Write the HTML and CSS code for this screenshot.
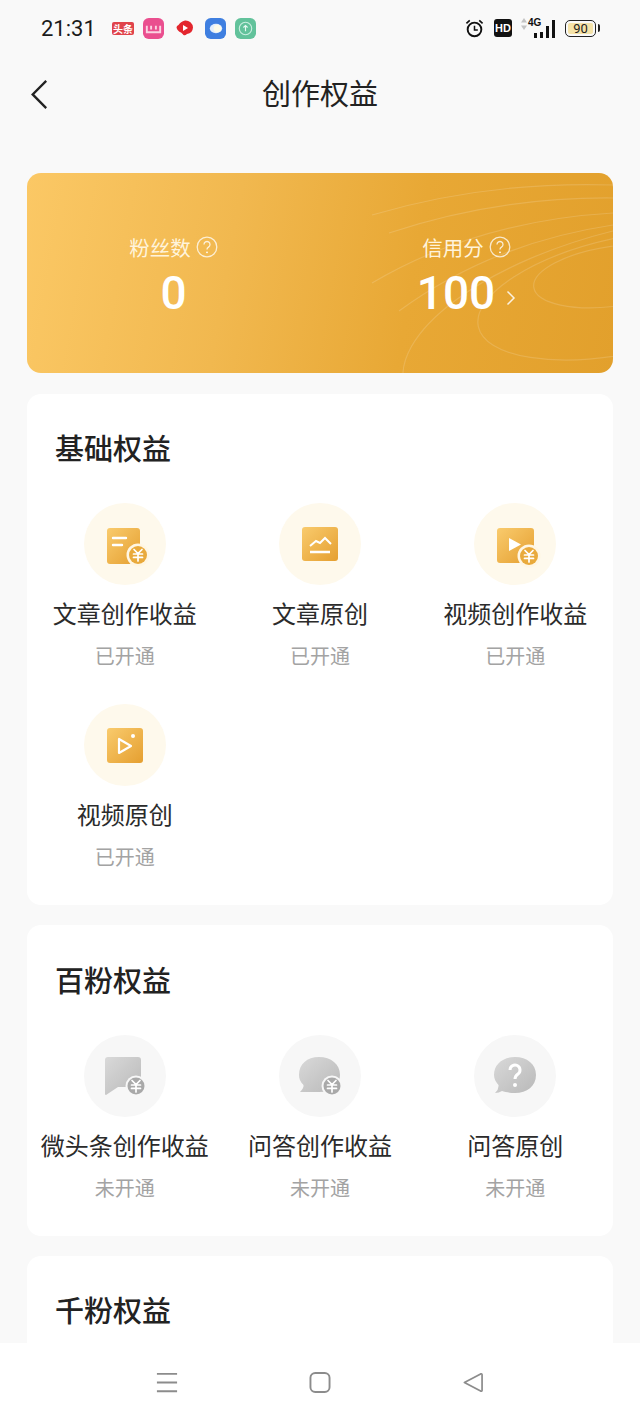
FILE: index.html
```html
<!DOCTYPE html>
<html>
<head>
    <title>创作权益</title>
    <meta name="viewport" content="width=device-width, initial-scale=1.0">
    <meta charset="utf-8">
    <link rel="stylesheet" href="styles.css">
</head>

<body>
    <svg class="defs" width="0" height="0">
        <defs>
            <linearGradient id="gold" x1="0" y1="0" x2="1" y2="1">
                <stop offset="0" stop-color="#f9cb6d"/>
                <stop offset="1" stop-color="#e59f30"/>
            </linearGradient>
            <linearGradient id="grey" x1="0" y1="0" x2="1" y2="1">
                <stop offset="0" stop-color="#d9d9d9"/>
                <stop offset="1" stop-color="#b9b9b9"/>
            </linearGradient>
            <g id="yen" fill="none" stroke="#fff" stroke-width="1.7" stroke-linecap="round">
                <path d="M-4-5.5L0-1.5L4-5.5M-4.5-1H4.5M-4.5 2.4H4.5M0-1.5V6"/>
            </g>
        </defs>
    </svg>

    <div class="status-bar">
        <div class="status-left">
            <span class="time">21:31</span>
            <span class="app-toutiao">头条</span>
            <svg class="app-icon" viewBox="0 0 22 22"><rect width="22" height="22" rx="6" fill="#ea4f8f"/><path d="M4 8V15H18V8M8.500 8V12M13.500 8V12" fill="none" stroke="#fbd3e2" stroke-width="2"/></svg>
            <svg class="app-icon app-video" viewBox="0 0 18 18"><path d="M9 1.500a7.500 7.500 0 0 1 8 7a7 7 0 0 1-6 6.500q-2 2-3.500 1q-1-1.500-2.500-2.500a7 7 0 0 1-4.500-5q0-2 2-2.500q2-3.500 6.500-4.500z" fill="#e3262e"/><path d="M7 6L12 9L7 12z" fill="#fff"/></svg>
            <svg class="app-icon" viewBox="0 0 22 22"><rect width="22" height="22" rx="6" fill="#3f7fe0"/><ellipse cx="11.500" cy="11" rx="6.500" ry="5" fill="#e4effc"/><circle cx="13" cy="11" r="4" fill="#fdfbe9"/></svg>
            <svg class="app-icon" viewBox="0 0 22 22"><rect width="22" height="22" rx="6" fill="#62c29b"/><circle cx="11" cy="11" r="6.500" fill="none" stroke="#c9eee0" stroke-width="1.200"/><path d="M11 14V8M8.800 10L11 8L13.200 10" fill="none" stroke="#e6f8f1" stroke-width="1.200"/></svg>
        </div>
        <div class="status-right">
            <svg class="alarm" viewBox="0 0 20 20"><circle cx="10" cy="11" r="7.200" fill="none" stroke="#111" stroke-width="2"/><path d="M10 7V11.500H13.500" fill="none" stroke="#111" stroke-width="1.600"/><path d="M1.500 4.500L5 1.500M18.500 4.500L15 1.500" stroke="#111" stroke-width="1.800"/></svg>
            <span class="hd">HD</span>
            <div class="signal">
                <svg class="updown" viewBox="0 0 6 12"><path d="M3 0L6 4.500H0zM3 12L0 7.500H6z" fill="#c4c4c4"/></svg>
                <span class="net">4G</span>
                <span class="bar bar-1"></span>
                <span class="bar bar-2"></span>
                <span class="bar bar-3"></span>
                <span class="bar bar-4"></span>
            </div>
            <div class="battery"><span class="battery-level">90</span></div>
        </div>
    </div>

    <div class="title-bar">
        <svg class="back" viewBox="0 0 20 32" preserveAspectRatio="none"><path d="M18 2L3 16.500L18 31" fill="none" stroke="#222" stroke-width="2.600"/></svg>
        <h1>创作权益</h1>
    </div>

    <div class="page">
        <div class="banner">
            <svg class="contour" viewBox="0 0 586 200" fill="none" stroke="#fff" stroke-opacity=".15" stroke-width="1.200">
                <path d="M345 42Q460 8 586 12M362 60Q470 24 586 25M345 110Q450 48 586 40M372 138Q465 70 586 52"/>
                <ellipse cx="588" cy="103" rx="82" ry="30" transform="rotate(-8 588 103)"/>
                <ellipse cx="600" cy="122" rx="152" ry="58" transform="rotate(-12 600 122)"/>
                <ellipse cx="610" cy="155" rx="240" ry="100" transform="rotate(-14 610 155)"/>
            </svg>
            <div class="stat">
                <div class="stat-label">粉丝数
                    <svg class="help" viewBox="0 0 22 22"><circle cx="11" cy="11" r="9.800" fill="none" stroke="#fff" stroke-opacity=".75" stroke-width="1.300"/><path d="M8 8.500a3 3 0 1 1 4.500 2.600q-1.500.9-1.500 2.400" fill="none" stroke="#fff" stroke-opacity=".8" stroke-width="1.300"/><circle cx="11" cy="16.300" r=".9" fill="#fff"/></svg>
                </div>
                <div class="stat-value">0</div>
            </div>
            <div class="stat">
                <div class="stat-label">信用分
                    <svg class="help" viewBox="0 0 22 22"><circle cx="11" cy="11" r="9.800" fill="none" stroke="#fff" stroke-opacity=".75" stroke-width="1.300"/><path d="M8 8.500a3 3 0 1 1 4.500 2.600q-1.500.9-1.500 2.400" fill="none" stroke="#fff" stroke-opacity=".8" stroke-width="1.300"/><circle cx="11" cy="16.300" r=".9" fill="#fff"/></svg>
                </div>
                <div class="stat-value">100
                    <svg class="arrow" viewBox="0 0 10 16"><path d="M1.500 1.500L8 8L1.500 14.500" fill="none" stroke="#fff" stroke-opacity=".85" stroke-width="1.500"/></svg>
                </div>
            </div>
        </div>

        <div class="card">
            <h2>基础权益</h2>
            <div class="grid">
                <div class="item">
                    <svg class="badge-icon on" viewBox="0 0 82 82">
                        <rect x="23" y="25" width="33" height="36" rx="3" fill="url(#gold)"/>
                        <path d="M29 35H42M29 42H38" stroke="#fff" stroke-width="2.400" stroke-linecap="round"/>
                        <circle cx="54" cy="52" r="11.500" fill="#fff6e3"/>
                        <circle cx="54" cy="52" r="9" fill="#e9aa3c"/>
                        <use href="#yen" x="54" y="52"/>
                    </svg>
                    <div class="name">文章创作收益</div>
                    <div class="state">已开通</div>
                </div>
                <div class="item">
                    <svg class="badge-icon on" viewBox="0 0 82 82">
                        <rect x="23" y="24" width="36" height="34" rx="3" fill="url(#gold)"/>
                        <path d="M31 43L37 38L41 40L46 35L52 41" fill="none" stroke="#fff" stroke-width="2"/>
                        <path d="M31 49H51" stroke="#fff" stroke-width="2.400"/>
                    </svg>
                    <div class="name">文章原创</div>
                    <div class="state">已开通</div>
                </div>
                <div class="item">
                    <svg class="badge-icon on" viewBox="0 0 82 82">
                        <rect x="23" y="25" width="37" height="35" rx="3" fill="url(#gold)"/>
                        <path d="M35 35L47 41.500L35 48z" fill="#fff"/>
                        <circle cx="55" cy="53" r="11.500" fill="#fff6e3"/>
                        <circle cx="55" cy="53" r="9" fill="#e9aa3c"/>
                        <use href="#yen" x="55" y="53"/>
                    </svg>
                    <div class="name">视频创作收益</div>
                    <div class="state">已开通</div>
                </div>
                <div class="item">
                    <svg class="badge-icon on" viewBox="0 0 82 82">
                        <rect x="23" y="24" width="36" height="35" rx="3" fill="url(#gold)"/>
                        <path d="M35 35V49L47 42z" fill="none" stroke="#fff" stroke-width="2.200" stroke-linejoin="round"/>
                        <circle cx="49" cy="32" r="2" fill="#fff"/>
                    </svg>
                    <div class="name">视频原创</div>
                    <div class="state">已开通</div>
                </div>
            </div>
        </div>

        <div class="card">
            <h2>百粉权益</h2>
            <div class="grid">
                <div class="item">
                    <svg class="badge-icon off" viewBox="0 0 82 82">
                        <path d="M24 22H54a3 3 0 0 1 3 3V52H34L22 60a1 1 0 0 1-1-1V25a3 3 0 0 1 3-3z" fill="url(#grey)"/>
                        <circle cx="52" cy="51" r="10.500" fill="#f7f7f7"/>
                        <circle cx="52" cy="51" r="8.500" fill="#a9a9a9"/>
                        <use href="#yen" x="52" y="51"/>
                    </svg>
                    <div class="name">微头条创作收益</div>
                    <div class="state">未开通</div>
                </div>
                <div class="item">
                    <svg class="badge-icon off" viewBox="0 0 82 82">
                        <path d="M40 22C52 22 61 29 61 40C61 51 52 57 40 57H21Q25 53 24.500 50C21 47 20 43 20 40C20 29 28 22 40 22z" fill="url(#grey)"/>
                        <circle cx="53" cy="51" r="10.500" fill="#f7f7f7"/>
                        <circle cx="53" cy="51" r="8.500" fill="#a9a9a9"/>
                        <use href="#yen" x="53" y="51"/>
                    </svg>
                    <div class="name">问答创作收益</div>
                    <div class="state">未开通</div>
                </div>
                <div class="item">
                    <svg class="badge-icon off" viewBox="0 0 82 82">
                        <path d="M41 22C53 22 62 29 62 40C62 51 53 58 41 58C36 58 31 57 28 56Q25 58 21 58Q25 54 24.500 50C22 47 20 44 20 40C20 29 29 22 41 22z" fill="url(#grey)"/>
                        <path d="M36 35a5 5 0 1 1 8 4q-3 2-3 5" fill="none" stroke="#fff" stroke-width="3"/>
                        <circle cx="41" cy="50" r="2" fill="#fff"/>
                    </svg>
                    <div class="name">问答原创</div>
                    <div class="state">未开通</div>
                </div>
            </div>
        </div>

        <div class="card">
            <h2>千粉权益</h2>
        </div>
    </div>

    <div class="nav-bar">
        <svg class="nav-icon" viewBox="0 0 24 22"><path d="M1 1.500H23M1 11H23M1 20.500H23" stroke="#8c8c8c" stroke-width="2"/></svg>
        <svg class="nav-icon" viewBox="0 0 22 22"><rect x="1" y="1" width="20" height="20" rx="5" fill="none" stroke="#8c8c8c" stroke-width="2"/></svg>
        <svg class="nav-icon" viewBox="0 0 22 22"><path d="M2 11L19 2Q20.500 1.500 20.500 3V19Q20.500 20.500 19 20L2 11z" fill="none" stroke="#8c8c8c" stroke-width="1.800" stroke-linejoin="round"/></svg>
    </div>
</body>
</html>
```

FILE: styles.css
```css
*{
    box-sizing: border-box;
}

html, body{
    height: 1422px;
    overflow: hidden;
}

body{
    position: relative;
    margin: 0;
    background: #f9f9f9;
    color: #222;
    font-family: "Noto Sans CJK SC", "Noto Sans", sans-serif;
}

.defs{
    position: absolute;
}

/* status bar */
.status-bar{
    display: flex;
    justify-content: space-between;
    align-items: center;
    height: 56px;
    padding: 0 44px 0 41px;
}

.status-left, .status-right{
    display: flex;
    align-items: center;
}

.time{
    width: 71px;
    font-family: Roboto, sans-serif;
    font-size: 22px;
    color: #1b1b1b;
}

.app-toutiao{
    width: 22px;
    height: 13px;
    margin-right: 9px;
    border-radius: 2px;
    background: #e0434b;
    color: #fff;
    font-size: 10px;
    font-weight: 700;
    line-height: 13px;
    text-align: center;
}

.app-icon{
    width: 21px;
    height: 21px;
    margin-right: 9px;
}

.app-icon:last-child{
    margin-right: 0;
}

.app-video{
    width: 18px;
    height: 18px;
    margin: 0 11px 0 3px;
}

.alarm{
    width: 19px;
    height: 19px;
    margin-right: 10px;
}

.hd{
    width: 18px;
    height: 18px;
    margin-right: 9px;
    border-radius: 3px;
    background: #111;
    color: #fff;
    font-family: "Liberation Sans", sans-serif;
    font-size: 11px;
    font-weight: 700;
    line-height: 18px;
    text-align: center;
}

.signal{
    position: relative;
    display: flex;
    justify-content: flex-end;
    align-items: flex-end;
    gap: 3px;
    width: 34px;
    height: 20px;
    margin-right: 10px;
}

.updown{
    position: absolute;
    left: 0;
    top: 0;
    width: 6px;
    height: 12px;
}

.net{
    position: absolute;
    left: 7px;
    top: -1px;
    font-family: "Liberation Sans", sans-serif;
    font-size: 10px;
    font-weight: 700;
    line-height: 12px;
    color: #111;
}

.bar{
    width: 3px;
    background: #111;
}

.bar-1{ height: 5px; }
.bar-2{ height: 6px; }
.bar-3{ height: 12px; }
.bar-4{ height: 18px; }

.battery{
    position: relative;
    width: 31px;
    height: 17px;
    padding: 2px;
    border: 1.5px solid #222;
    border-radius: 5px;
}

.battery::after{
    content: "";
    position: absolute;
    right: -5px;
    top: 3px;
    width: 2.500px;
    height: 8px;
    border-radius: 0 2px 2px 0;
    background: #222;
}

.battery-level{
    display: block;
    height: 100%;
    border-radius: 2px;
    background: #f5e3a8;
    color: #222;
    font-family: Roboto, sans-serif;
    font-size: 13px;
    line-height: 11px;
    text-align: center;
}

/* title */
.title-bar{
    position: relative;
    display: flex;
    justify-content: center;
    align-items: center;
    height: 76px;
}

.title-bar h1{
    margin: 0 0 4px;
    font-size: 29px;
    font-weight: 400;
    line-height: 40px;
}

.back{
    position: absolute;
    left: 30px;
    top: 23px;
    width: 18px;
    height: 30px;
}

/* page */
.page{
    padding: 41px 27px 0;
}

.banner{
    position: relative;
    display: flex;
    height: 200px;
    margin-bottom: 21px;
    padding-top: 60px;
    overflow: hidden;
    border-radius: 14px;
    background: linear-gradient(100deg, #fbc865 0%, #f1b84f 35%, #e8a835 65%, #e2a02c 100%);
}

.contour{
    position: absolute;
    left: 0;
    top: 0;
    width: 100%;
    height: 100%;
}

.stat{
    position: relative;
    flex: 1;
    display: flex;
    flex-direction: column;
    align-items: center;
    color: #fff;
}

.stat-label{
    display: flex;
    justify-content: center;
    align-items: center;
    gap: 5px;
    height: 28px;
    font-size: 20.500px;
    line-height: 28px;
    color: #fff4dc;
}

.help{
    width: 22px;
    height: 22px;
}

.stat-value{
    display: flex;
    align-items: center;
    gap: 11px;
    height: 40px;
    margin-top: 12px;
    font-family: Roboto, sans-serif;
    font-size: 46px;
    font-weight: 500;
    line-height: 40px;
}

.arrow{
    width: 10px;
    height: 16px;
    margin-top: 10px;
}

.card{
    margin-bottom: 20px;
    padding: 33px 0 34px;
    border-radius: 14px;
    background: #fff;
}

.card + .card{
    padding-top: 34px;
}

.card:last-child{
    padding-top: 33px;
}

.card h2{
    margin: 0 0 36px 28px;
    font-size: 29px;
    font-weight: 500;
    line-height: 40px;
    color: #222;
}

.grid{
    display: grid;
    grid-template-columns: repeat(3, 1fr);
    row-gap: 34px;
}

.item{
    display: flex;
    flex-direction: column;
    align-items: center;
}

.badge-icon{
    width: 82px;
    height: 82px;
    border-radius: 50%;
}

.badge-icon.on{
    background: #fef9ec;
}

.badge-icon.off{
    background: #f7f7f7;
}

.name{
    margin-top: 11px;
    font-size: 24px;
    line-height: 34px;
    white-space: nowrap;
    color: #2b2b2b;
}

.state{
    margin-top: 12px;
    font-size: 20px;
    line-height: 28px;
    color: #a3a3a3;
}

/* navigation bar */
.nav-bar{
    position: absolute;
    left: 0;
    right: 0;
    bottom: 0;
    display: flex;
    justify-content: center;
    align-items: center;
    gap: 131px;
    height: 79px;
    background: #fff;
}

.nav-icon{
    width: 22px;
    height: 21px;
}
```
